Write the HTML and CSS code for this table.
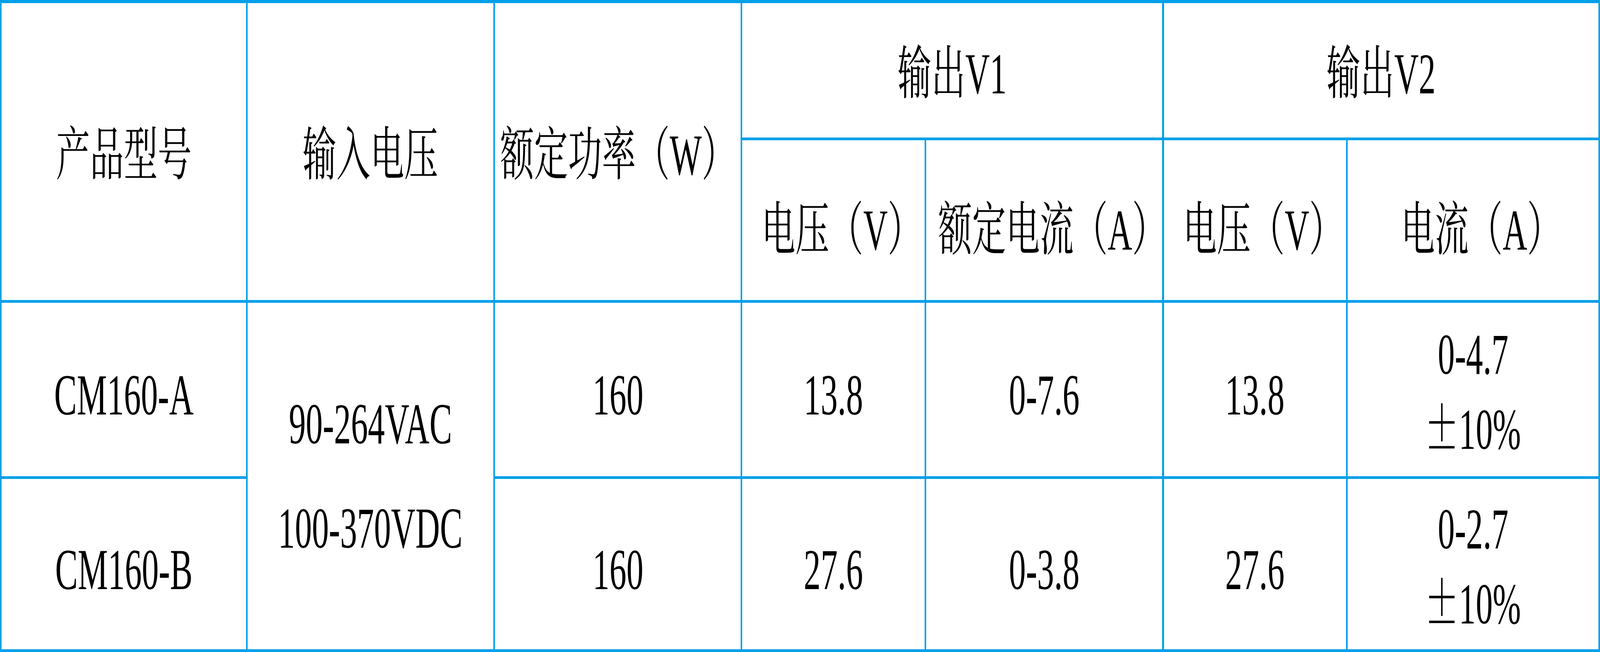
FILE: index.html
```html
<!DOCTYPE html>
<html lang="zh-CN">
<head>
<meta charset="utf-8">
<title>CM160 规格</title>
<link rel="stylesheet" href="styles.css">
</head>
<body>
<div class="spec">
  <div class="cell rs2"><span class="t">产品型号</span></div>
  <div class="cell rs2"><span class="t">输入电压</span></div>
  <div class="cell rs2"><span class="t">额定功率（W）</span></div>
  <div class="cell cs2"><span class="t">输出V1</span></div>
  <div class="cell cs2"><span class="t">输出V2</span></div>

  <div class="cell sub"><span class="t">电压（V）</span></div>
  <div class="cell sub"><span class="t">额定电流（A）</span></div>
  <div class="cell sub"><span class="t">电压（V）</span></div>
  <div class="cell sub"><span class="t">电流（A）</span></div>

  <div class="cell body"><span class="t">CM160-A</span></div>
  <div class="cell rs2 input"><span class="t">90-264VAC</span><span class="t">100-370VDC</span></div>
  <div class="cell body"><span class="t">160</span></div>
  <div class="cell body"><span class="t">13.8</span></div>
  <div class="cell body"><span class="t">0-7.6</span></div>
  <div class="cell body"><span class="t">13.8</span></div>
  <div class="cell two"><span class="t">0-4.7</span><span class="t"><span class="pm">±</span>10%</span></div>

  <div class="cell body"><span class="t">CM160-B</span></div>
  <div class="cell body"><span class="t">160</span></div>
  <div class="cell body"><span class="t">27.6</span></div>
  <div class="cell body"><span class="t">0-3.8</span></div>
  <div class="cell body"><span class="t">27.6</span></div>
  <div class="cell two"><span class="t">0-2.7</span><span class="t"><span class="pm">±</span>10%</span></div>
</div>
</body>
</html>
```

FILE: styles.css
```css
:root {
  --sx: 1;
}

@media (max-width: 6000px) {
  :root {
    --sx: 0.5863;
  }
}

html, body {
  margin: 0;
  padding: 0;
  background: #ffffff;
  overflow: hidden;
}

.spec {
  box-sizing: border-box;
  width: 100vw;
  height: 1669px;
  display: grid;
  grid-template-columns: 15.2734vw 15.3593vw 15.3593vw 11.3942vw 14.7581vw 11.3942vw 15.6599vw;
  grid-template-rows: 344px 409px 444px 436px;
  column-gap: 0.1002vw;
  row-gap: 7px;
  padding: 8px 0.1002vw 7px 0.1002vw;
  background: #00a0e9;
  font-family: "Liberation Serif", "Noto Serif CJK SC", "Noto Sans CJK SC", serif;
  font-size: 148px;
  color: #000000;
}

.cell {
  min-width: 0;
  background: #ffffff;
  display: flex;
  flex-direction: column;
  align-items: center;
  justify-content: center;
  text-align: center;
  white-space: nowrap;
  line-height: 1.2;
  padding-top: 20px;
  box-sizing: border-box;
}

.t {
  display: block;
  transform: scaleX(var(--sx));
  transform-origin: 50% 50%;
}

.rs2 {
  grid-row: span 2;
}

.cs2 {
  grid-column: span 2;
}

.sub {
  padding-top: 52px;
  padding-left: 1vw;
}

.body {
  padding-top: 30px;
}

.input {
  line-height: 1.8;
  padding-top: 0;
}

.two {
  line-height: 1.2;
  padding-top: 14px;
}

.pm {
  font-family: "Noto Serif CJK SC", "Noto Sans CJK SC", serif;
}
```
